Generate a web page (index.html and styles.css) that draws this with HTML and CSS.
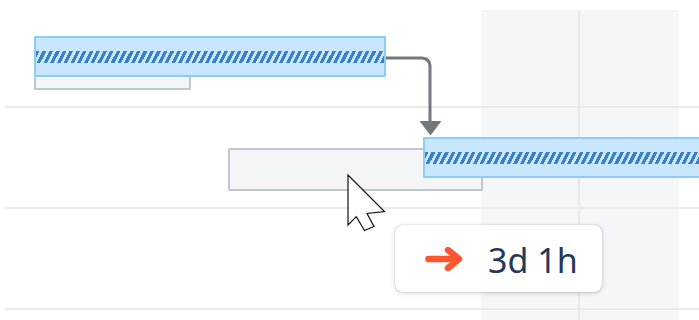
FILE: index.html
```html
<!DOCTYPE html>
<html lang="en">
<head>
  <meta charset="UTF-8">
  <meta name="viewport" content="width=device-width, initial-scale=1.0">
  <title>Timeline dependency</title>
  <link rel="stylesheet" href="styles.css">
</head>
<body>
  <div class="chart">
    <!-- weekend shading and day divider -->
    <div class="weekend"></div>
    <div class="day-line"></div>

    <div class="rows">
      <div class="row"></div>
      <div class="row"></div>
      <div class="row"></div>
    </div>

    <!-- bars: baseline (grey) under the scheduled (blue) bar -->
    <div class="bar baseline bar-1-base"></div>
    <div class="bar planned bar-1"><div class="progress"></div></div>

    <div class="bar baseline bar-2-base"></div>
    <div class="bar planned bar-2"><div class="progress"></div></div>

    <svg class="link" width="699" height="320" viewBox="0 0 699 320">
      <path d="M386 58 H421 Q430 58 430 67 V122" fill="none" stroke="#74787e" stroke-width="3"/>
      <polygon points="419.5,121 441.5,121 430.5,135.5" fill="#74787e"/>
    </svg>

    <svg class="cursor" width="40" height="60" viewBox="0 0 40 60">
      <polygon points="1,1 1,51 9.3,42.7 17.5,56.5 27,52.5 20,39.5 37.5,37.5" fill="#fff" stroke="#111" stroke-width="1.2" stroke-linejoin="miter"/>
    </svg>

    <div class="tooltip">
      <svg class="tooltip-icon" width="38" height="24" viewBox="0 0 38 24">
        <path d="M3.5 12 H33" stroke="#ff5630" stroke-width="6.5" stroke-linecap="round"/>
        <path d="M23 3 L34 12 L23 21" fill="none" stroke="#ff5630" stroke-width="6.5" stroke-linecap="round" stroke-linejoin="round"/>
      </svg>
      <span class="tooltip-text">3d 1h</span>
    </div>
  </div>
</body>
</html>
```

FILE: styles.css
```css
body {
  margin: 0;
  background-color: #fff;
  font-family: "Noto Sans", "Open Sans", sans-serif;
}

.chart {
  position: relative;
  width: 699px;
  height: 320px;
  overflow: hidden;
  background-color: #fff;
}

.weekend {
  position: absolute;
  left: 481px;
  top: 10px;
  width: 198px;
  bottom: 0;
  background-color: #f5f6f8;
}

.day-line {
  position: absolute;
  left: 578px;
  top: 10px;
  width: 2px;
  bottom: 0;
  background-color: #e8e8e8;
}

.rows {
  position: relative;
  margin-left: 5px;
  padding-top: 7px;
}

.row {
  height: 99px;
  border-bottom: 2px solid #ebebeb;
}

.bar {
  position: absolute;
  box-sizing: border-box;
  border-radius: 1px;
}

.baseline {
  background-color: #f4f5f7;
  border: 2px solid #c1c7d0;
  height: 43px;
}

.planned {
  background-color: #c8e6fe;
  border: 2px solid #8ecbf6;
  height: 41px;
  display: flex;
  align-items: center;
}

.progress {
  width: 100%;
  height: 12px;
  background-image: repeating-linear-gradient(117deg, #3a80c8 0 3.2px, transparent 3.2px 6px);
}

.bar-1-base {
  left: 34px;
  top: 47px;
  width: 157px;
}

.bar-1 {
  left: 34px;
  top: 36px;
  width: 352px;
}

.bar-2-base {
  left: 228px;
  top: 148px;
  width: 255px;
}

.bar-2 {
  left: 423px;
  top: 137px;
  width: 300px;
}

.link {
  position: absolute;
  left: 0;
  top: 0;
}

.cursor {
  position: absolute;
  left: 347px;
  top: 174px;
}

.tooltip {
  position: absolute;
  left: 395px;
  top: 225px;
  width: 207px;
  height: 67px;
  box-sizing: border-box;
  padding-left: 30px;
  display: flex;
  align-items: center;
  gap: 25px;
  background-color: #fff;
  border-radius: 8px;
  box-shadow: 0 1px 4px rgba(9, 30, 66, 0.22), 0 0 1px rgba(9, 30, 66, 0.3);
}

.tooltip-text {
  font-size: 34px;
  color: #253858;
  line-height: 1;
  padding-top: 2px;
}
```
